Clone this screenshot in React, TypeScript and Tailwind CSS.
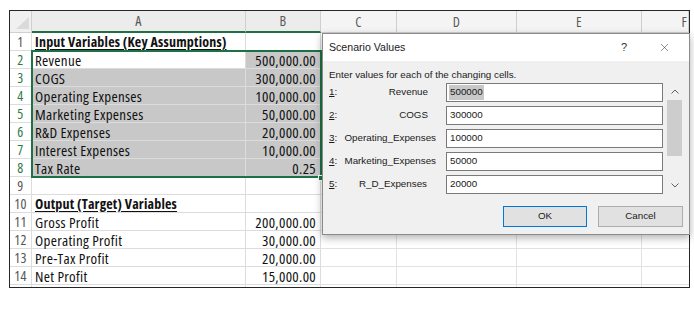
import React from 'react';
import { X } from 'lucide-react';

type Row = { a: string; b: string; bold?: boolean };

const rows: Row[] = [
  { a: 'Input Variables (Key Assumptions)', b: '', bold: true },
  { a: 'Revenue', b: '500,000.00' },
  { a: 'COGS', b: '300,000.00' },
  { a: 'Operating Expenses', b: '100,000.00' },
  { a: 'Marketing Expenses', b: '50,000.00' },
  { a: 'R&D Expenses', b: '20,000.00' },
  { a: 'Interest Expenses', b: '10,000.00' },
  { a: 'Tax Rate', b: '0.25' },
  { a: '', b: '' },
  { a: 'Output (Target) Variables', b: '', bold: true },
  { a: 'Gross Profit', b: '200,000.00' },
  { a: 'Operating Profit', b: '30,000.00' },
  { a: 'Pre-Tax Profit', b: '20,000.00' },
  { a: 'Net Profit', b: '15,000.00' },
  { a: '', b: '' },
];

const cols = ['A', 'B', 'C', 'D', 'E', 'F'];

const changing = [
  { n: '1', label: 'Revenue', value: '500000', pad: 'pr-[8px]' },
  { n: '2', label: 'COGS', value: '300000', pad: 'pr-[8px]' },
  { n: '3', label: 'Operating_Expenses', value: '100000', pad: 'pr-0' },
  { n: '4', label: 'Marketing_Expenses', value: '50000', pad: 'pr-0' },
  { n: '5', label: 'R_D_Expenses', value: '20000', pad: 'pr-[9px]' },
];

const Sheet = () => {
  return (
    <div className="ml-[9px] mt-[10px] w-[681px] h-[278px] border border-[#262626] overflow-hidden bg-white font-['Open_Sans',sans-serif] [font-stretch:condensed] text-[15px] leading-[16px] tracking-[0.3px] text-[#111]">
      <div className="grid grid-cols-[22px_214px_75px_76px_120px_125px_47px]">
        {/* header row */}
        <div className="h-[22px] bg-[#f0f0f0] border-r border-b border-[#cfcfcf] flex items-end justify-end">
          <svg width="14" height="13" viewBox="0 0 14 13" className="mb-[2px] mr-[1px]">
            <polygon points="13,0 13,12 0,12" fill="#dadada" />
          </svg>
        </div>
        {cols.map((c, i) => (
          <div
            key={c}
            className={
              'h-[22px] flex items-center text-[14px] text-[#5a5a5a] border-r ' +
              (i < 2
                ? 'bg-[#ececec] border-b-2 border-b-[#1e7145] border-r-[#cfcfcf] '
                : 'bg-[#f4f4f4] border-b border-[#cfcfcf] ') +
              (c === 'F' ? 'justify-end pr-[1px]' : 'justify-center')
            }
          >
            {c}
          </div>
        ))}

        {rows.map((r, idx) => {
          const n = idx + 1;
          const sel = n >= 2 && n <= 8;
          return (
            <React.Fragment key={n}>
              <div
                className={
                  'h-[18px] flex items-center justify-center text-[14px] bg-white border-b border-r border-[#dcdcdc] ' +
                  (sel ? 'text-[#2f7a47] border-r-[#1e7145]' : 'text-[#555]')
                }
              >
                {n <= 14 ? n : ''}
              </div>
              <div
                className={
                  'h-[18px] flex items-center pl-[3px] border-b border-r border-[#dcdcdc] whitespace-nowrap ' +
                  (sel && n !== 2 ? 'bg-[#c8c8c8]' : 'bg-white') +
                  (r.bold ? ' text-[14px] tracking-[0.2px] font-bold underline underline-offset-[2px]' : '')
                }
              >
                {r.a}
              </div>
              <div
                className={
                  'h-[18px] flex items-center justify-end pr-[4px] border-b border-r border-[#dcdcdc] ' +
                  (sel ? 'bg-[#c8c8c8]' : 'bg-white')
                }
              >
                {r.b}
              </div>
              <div className="h-[18px] border-b border-r border-[#e2e2e2]" />
              <div className="h-[18px] border-b border-r border-[#e2e2e2]" />
              <div className="h-[18px] border-b border-r border-[#e2e2e2]" />
              <div className="h-[18px] border-b border-[#e2e2e2]" />
            </React.Fragment>
          );
        })}
      </div>
    </div>
  );
};

const Chevron = ({ up }: { up?: boolean }) => (
  <svg width="8" height="5" viewBox="0 0 8 5">
    <polyline
      points={up ? '0.5,4.5 4,1 7.5,4.5' : '0.5,0.5 4,4 7.5,0.5'}
      fill="none"
      stroke="#606060"
      strokeWidth="1"
    />
  </svg>
);

const ScenarioDialog = () => {
  return (
    <div className="absolute left-[322px] top-[33px] w-[368px] h-[202px] bg-[#f0f0f0] border border-[#8a8a8a] shadow-[0_3px_8px_rgba(0,0,0,0.3)] font-['Liberation_Sans',sans-serif] text-[#1a1a1a]">
      <div className="h-[27px] bg-white flex items-center pl-[6px] pr-[5px]">
        <span className="text-[10.6px]">Scenario Values</span>
        <span className="ml-auto w-[40px] text-center text-[11px] text-[#333]">?</span>
        <span className="w-[40px] flex justify-center">
          <X size={13} strokeWidth={1} color="#333" />
        </span>
      </div>
      <div className="px-[6px] pt-[8px] pb-[7px]">
        <div className="text-[9.8px] leading-[12px]">Enter values for each of the changing cells.</div>
        <div className="mt-[2px] flex h-[111px]">
          <div className="flex flex-col gap-[4px] overflow-hidden">
            {changing.map((c) => (
              <div key={c.n} className="flex items-center h-[19px] text-[9.8px]">
                <span className="w-[12px]">
                  <span className="underline">{c.n}</span>:
                </span>
                <span className={'w-[95px] text-right whitespace-nowrap ' + c.pad}>{c.label}</span>
                <div className="ml-[10px] w-[217px] h-[19px] bg-white border border-[#7a7a7a] flex items-center pl-[2px]">
                  <span className={c.n === '1' ? 'bg-[#c8c8c8] px-[1px]' : 'px-[1px]'}>{c.value}</span>
                </div>
              </div>
            ))}
          </div>
          <div className="ml-[4px] w-[15px] flex flex-col items-center">
            <div className="h-[17px] flex items-center justify-center">
              <Chevron up />
            </div>
            <div className="w-[15px] h-[56px] bg-[#cdcdcd]" />
            <div className="flex-1" />
            <div className="h-[17px] flex items-center justify-center">
              <Chevron />
            </div>
          </div>
        </div>
        <div className="mt-[12px] flex justify-end gap-[11px] text-[9.8px]">
          <button className="w-[84px] h-[21px] bg-[#e1e1e1] border border-[#0078d7]">OK</button>
          <button className="w-[85px] h-[21px] bg-[#e1e1e1] border border-[#adadad]">Cancel</button>
        </div>
      </div>
    </div>
  );
};

const App = () => {
  return (
    <div className="relative w-[694px] h-[316px] bg-white overflow-hidden">
      <Sheet />
      {/* selection outline A2:B8 */}
      <div className="absolute left-[31px] top-[50px] w-[291px] h-[128px] border-2 border-[#1e7145]" />
      <div className="absolute left-[318px] top-[175px] w-[6px] h-[6px] bg-[#1e7145] border border-white" />
      <ScenarioDialog />
    </div>
  );
};

export default App;
